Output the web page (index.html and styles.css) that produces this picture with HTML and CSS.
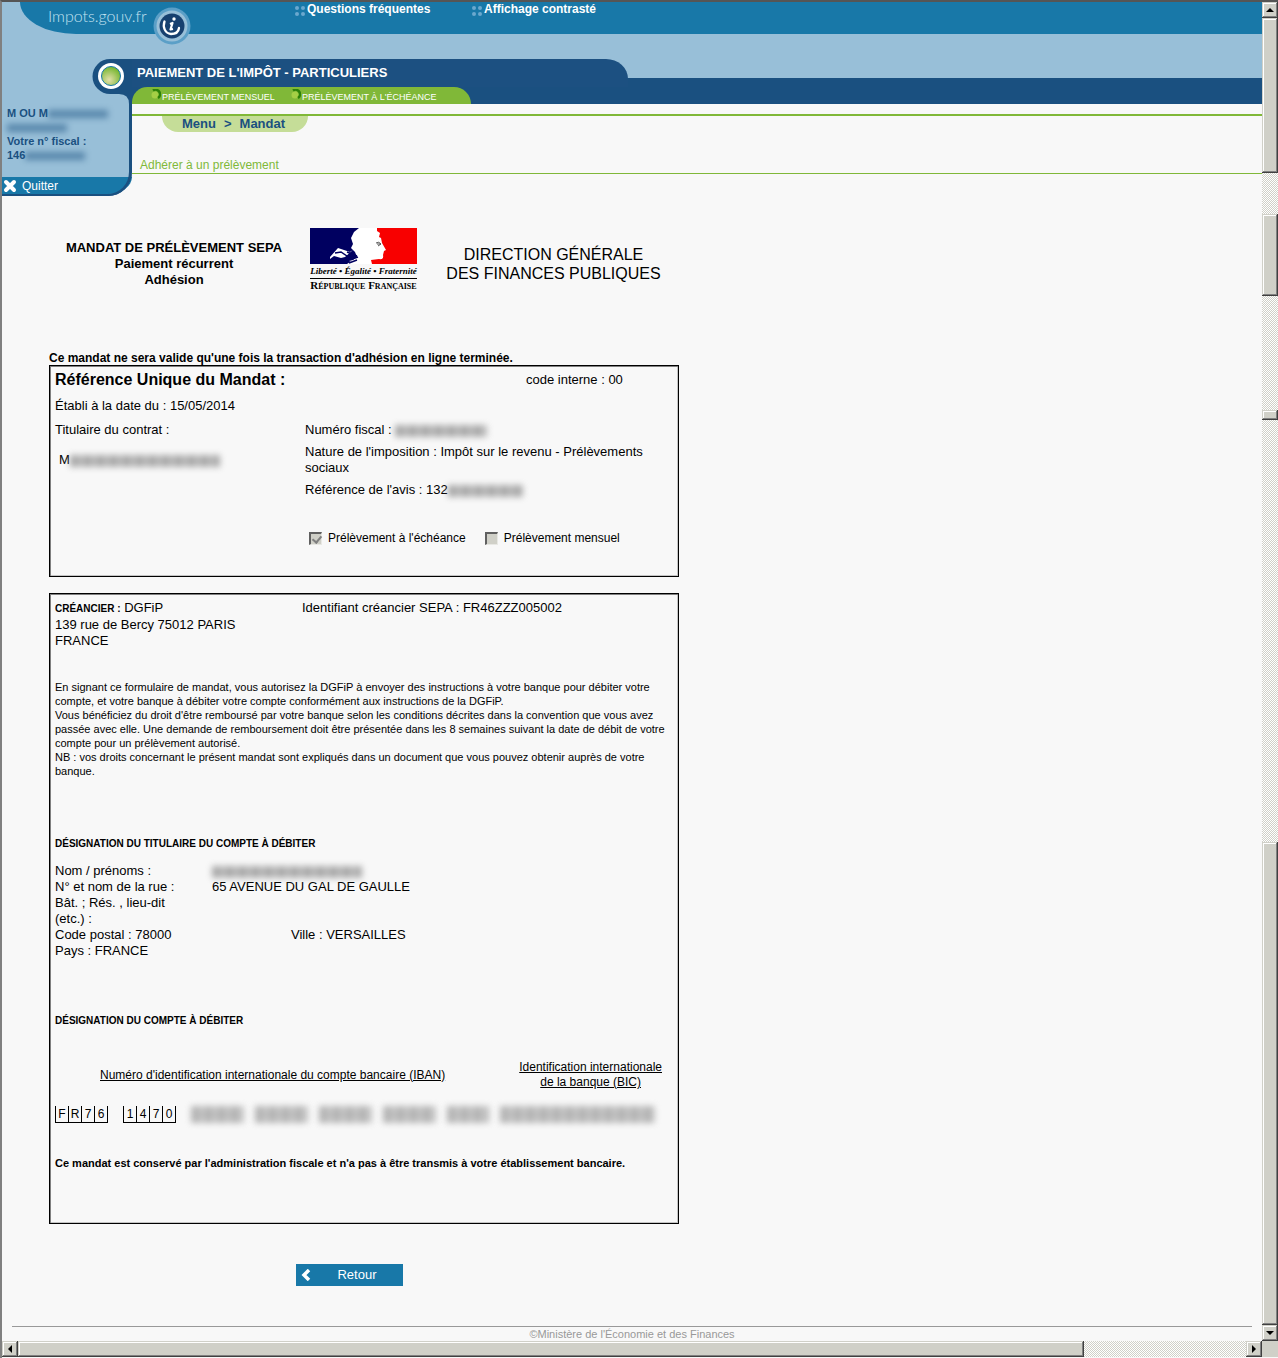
FILE: index.html
```html
<!DOCTYPE html>
<html lang="fr">
<head>
<meta charset="utf-8">
<meta name="viewport" content="width=device-width, initial-scale=1">
<title>Impots.gouv.fr - Mandat de prélèvement SEPA</title>
<link rel="stylesheet" href="styles.css">
</head>
<body>
<div class="window">
  <div class="page">
    <header class="topbar">
      <div class="topbar-inner">
        <a class="brand" href="#">Impots.gouv.fr</a>
        <svg class="brand-badge" viewBox="0 0 40 40" aria-hidden="true">
          <circle cx="20" cy="20" r="18.5" fill="#5b9fc7"/>
          <circle cx="20" cy="20" r="15.5" fill="#98bfd8"/>
          <circle cx="20" cy="20" r="12.5" fill="#17406f"/>
          <path d="M12.5 15.5C10.500 21 13 27.500 19 28C23.500 28 26.500 26 27 22" fill="none" stroke="#fff" stroke-width="2.300" stroke-linecap="round"/>
          <path d="M18 18L20.500 17L18.500 23.500L21 23" fill="none" stroke="#fff" stroke-width="2.200" stroke-linejoin="round"/>
          <circle cx="22" cy="13" r="1.700" fill="#fff"/>
        </svg>
        <nav class="toplinks">
          <a href="#"><svg class="dots" viewBox="0 0 10 10" aria-hidden="true"><g fill="#6ba8ce"><circle cx="2" cy="2" r="2"/><circle cx="8" cy="2" r="2"/><circle cx="2" cy="8" r="2"/><circle cx="8" cy="8" r="2"/></g></svg>Questions fréquentes</a>
          <a href="#"><svg class="dots" viewBox="0 0 10 10" aria-hidden="true"><g fill="#6ba8ce"><circle cx="2" cy="2" r="2"/><circle cx="8" cy="2" r="2"/><circle cx="2" cy="8" r="2"/><circle cx="8" cy="8" r="2"/></g></svg>Affichage contrasté</a>
        </nav>
      </div>
    </header>

    <div class="masthead">
      <aside class="account">
        <svg class="account-badge" viewBox="0 0 40 50" aria-hidden="true">
          <defs><radialGradient id="lamp" cx="0.400" cy="0.700" r="0.700"><stop offset="0" stop-color="#e3dfa8"/><stop offset="1" stop-color="#72b52c"/></radialGradient></defs>
          <path d="M18 0H40V50H37V45Q37 35 27 35H18A17.500 17.500 0 0 1 18 0Z" fill="#1a5080"/>
          <circle cx="19" cy="17" r="13" fill="#fff"/>
          <circle cx="19" cy="17" r="9.500" fill="url(#lamp)" stroke="#1878a8" stroke-width="1"/>
        </svg>
        <div class="identity">
          <p>M OU M<span class="redacted navy w60"></span></p>
          <p><span class="redacted navy w60"></span></p>
          <p>Votre n° fiscal :</p>
          <p>146<span class="redacted navy w60"></span></p>
        </div>
        <a class="quit" href="#"><svg viewBox="0 0 14 14" aria-hidden="true"><path d="M3 3L11 11M11 3L3 11" stroke="#fff" stroke-width="4" stroke-linecap="round"/></svg>Quitter</a>
      </aside>
      <div class="masthead-main">
        <div class="band">
          <div class="band-title">PAIEMENT DE L'IMPÔT - PARTICULIERS</div>
          <nav class="tabs">
            <a href="#"><svg viewBox="0 0 11 11" aria-hidden="true"><circle cx="5" cy="6" r="3.500" fill="#a5cf45"/><path d="M3 1.500A4.500 4.500 0 1 1 8 9" fill="none" stroke="#2d8208" stroke-width="2.500"/></svg>PRÉLÈVEMENT MENSUEL</a>
            <a href="#"><svg viewBox="0 0 11 11" aria-hidden="true"><circle cx="5" cy="6" r="3.500" fill="#a5cf45"/><path d="M3 1.500A4.500 4.500 0 1 1 8 9" fill="none" stroke="#2d8208" stroke-width="2.500"/></svg>PRÉLÈVEMENT À L'ÉCHÉANCE</a>
          </nav>
        </div>
        <div class="crumb-row">
          <nav class="crumbs"><a href="#">Menu</a><span>&gt;</span><a href="#">Mandat</a></nav>
        </div>
        <h1>Adhérer à un prélèvement</h1>
      </div>
    </div>

    <main class="content">
      <div class="intro">
        <h2>MANDAT DE PRÉLÈVEMENT SEPA<br>Paiement récurrent<br>Adhésion</h2>
        <div class="republic">
          <svg viewBox="0 0 107 36" aria-hidden="true">
            <path d="M0 0H107V36H0Z" fill="#fff"/>
            <path d="M0 0H49L44 4L41 10L43 16L41 20L45 24L47 29L43 32L37 36H0Z" fill="#000060"/>
            <path d="M67 0H107V36H62L61 32L69 31Q74 32 73 27L74 23L76 22L72 15L71 10L69 9L70 5L67 3Z" fill="#f80000"/>
            <path d="M20 29L28 20L40 24L43 22L35 29L31 30L24 28L20 31ZM39 33L48 31L44 35Z" fill="#fff"/>
            <path d="M25 25L31 24L37 28M37 24L47 28M42 31L48 29M39 35L47 32" fill="none" stroke="#000060" stroke-width="1.500"/>
            <path d="M66 15Q69 13 71 16L68 18M67 16H71" fill="none" stroke="#555" stroke-width="1"/>
          </svg>
          <p class="motto">Liberté • Égalité • Fraternité</p>
          <p class="state">République Française</p>
        </div>
        <p class="direction">DIRECTION GÉNÉRALE<br>DES FINANCES PUBLIQUES</p>
      </div>

      <p class="notice">Ce mandat ne sera valide qu'une fois la transaction d'adhésion en ligne terminée.</p>

      <section class="box mandate">
        <div class="mandate-head">
          <h2>Référence Unique du Mandat :</h2>
          <p>code interne : 00</p>
        </div>
        <p class="line">Établi à la date du : 15/05/2014</p>
        <div class="mandate-body">
          <div>
            <p class="line">Titulaire du contrat :</p>
            <p class="holder">M<span class="redacted w150"></span></p>
          </div>
          <div>
            <p class="line">Numéro fiscal : <span class="redacted w100"></span></p>
            <p class="tax">Nature de l'imposition : Impôt sur le revenu - Prélèvements sociaux</p>
            <p>Référence de l'avis : 132<span class="redacted w75"></span></p>
            <div class="choices">
              <label><input type="checkbox" checked disabled>Prélèvement à l'échéance</label>
              <label><input type="checkbox" disabled>Prélèvement mensuel</label>
            </div>
          </div>
        </div>
      </section>

      <section class="box details">
        <div class="creditor">
          <p><strong>CRÉANCIER :</strong> DGFiP<br>139 rue de Bercy 75012 PARIS<br>FRANCE</p>
          <p>Identifiant créancier SEPA : FR46ZZZ005002</p>
        </div>
        <div class="terms">
          <p>En signant ce formulaire de mandat, vous autorisez la DGFiP à envoyer des instructions à votre banque pour débiter votre compte, et votre banque à débiter votre compte conformément aux instructions de la DGFiP.</p>
          <p>Vous bénéficiez du droit d'être remboursé par votre banque selon les conditions décrites dans la convention que vous avez passée avec elle. Une demande de remboursement doit être présentée dans les 8 semaines suivant la date de débit de votre compte pour un prélèvement autorisé.</p>
          <p>NB : vos droits concernant le présent mandat sont expliqués dans un document que vous pouvez obtenir auprès de votre banque.</p>
        </div>
        <h3>DÉSIGNATION DU TITULAIRE DU COMPTE À DÉBITER</h3>
        <dl class="address">
          <dt>Nom / prénoms :</dt><dd><span class="redacted w150"></span></dd>
          <dt>N° et nom de la rue :</dt><dd>65 AVENUE DU GAL DE GAULLE</dd>
          <dt>Bât. ; Rés. , lieu-dit (etc.) :</dt><dd></dd>
        </dl>
        <div class="city"><p>Code postal : 78000</p><p>Ville : VERSAILLES</p></div>
        <p>Pays : FRANCE</p>
        <h3 class="account-title">DÉSIGNATION DU COMPTE À DÉBITER</h3>
        <div class="bank-heads">
          <p>Numéro d'identification internationale du compte bancaire (IBAN)</p>
          <p>Identification internationale<br>de la banque (BIC)</p>
        </div>
        <div class="bank-codes">
          <span class="cells"><span>F</span><span>R</span><span>7</span><span>6</span></span>
          <span class="cells"><span>1</span><span>4</span><span>7</span><span>0</span></span>
          <span class="masked">
            <span class="redacted w53"></span><span class="redacted w53"></span><span class="redacted w53"></span><span class="redacted w53"></span><span class="redacted w42"></span><span class="redacted w155"></span>
          </span>
        </div>
        <p class="keep">Ce mandat est conservé par l'administration fiscale et n'a pas à être transmis à votre établissement bancaire.</p>
      </section>

      <div class="actions">
        <button class="back" type="button"><svg viewBox="0 0 10 12" aria-hidden="true"><path d="M8 1L3 6L8 11" fill="none" stroke="#fff" stroke-width="3.500"/></svg><span>Retour</span></button>
      </div>
    </main>

    <footer>©Ministère de l'Économie et des Finances</footer>
  </div>

  <div class="vbar">
    <button class="bevel arrow" type="button" aria-label="Défiler vers le haut"><svg viewBox="0 0 8 8"><path d="M0 6L4 2L8 6Z"/></svg></button>
    <div class="bevel g155"></div><div class="g41"></div><div class="bevel g82"></div><div class="g113"></div><div class="bevel g10"></div><div class="g422"></div><div class="bevel g482"></div>
    <button class="bevel arrow" type="button" aria-label="Défiler vers le bas"><svg viewBox="0 0 8 8"><path d="M0 2L4 6L8 2Z"/></svg></button>
  </div>
  <div class="hbar">
    <button class="bevel arrow" type="button" aria-label="Défiler vers la gauche"><svg viewBox="0 0 8 8"><path d="M6 0L2 4L6 8Z"/></svg></button>
    <div class="bevel g1066"></div><div class="g162"></div>
    <button class="bevel arrow" type="button" aria-label="Défiler vers la droite"><svg viewBox="0 0 8 8"><path d="M2 0L6 4L2 8Z"/></svg></button>
  </div>
  <div class="corner"></div>
</div>
</body>
</html>
```
FILE: styles.css
```css
* { box-sizing: border-box; }

body {
  margin: 0;
  background: #f8f8f8;
  color: #000;
  font: 13px/16px "Liberation Sans", Arial, sans-serif;
}

h1, h2, h3, p, dl, dd { margin: 0; }
a { color: inherit; text-decoration: none; }
svg { display: block; flex: none; }

.window {
  display: grid;
  grid-template-columns: minmax(0, 1fr) 16px;
  grid-template-rows: 1fr 16px;
  min-height: 100vh;
  padding-bottom: 1px;
  border-top: 2px solid #555;
  border-left: 2px solid #808080;
}

.page { display: flex; flex-direction: column; }

/* Top bar */
.topbar { background: #98bfd8; }
.topbar-inner {
  position: relative;
  display: flex;
  height: 32px;
  margin-left: 18px;
  background: #1878a8;
  border-bottom-left-radius: 56px 32px;
}
.brand {
  width: 273px;
  padding: 2px 0 0 28px;
  color: #c4e2f0;
  font: 300 16px/24px Lato, sans-serif;
}
.brand-badge { position: absolute; left: 132px; top: 4px; width: 40px; height: 40px; }
.toplinks { display: flex; color: #fff; font-size: 12px; font-weight: bold; line-height: 14px; }
.toplinks a { display: flex; gap: 2px; width: 177px; padding-left: 2px; }
.dots { width: 10px; height: 10px; margin-top: 4px; }

/* Account panel and titles */
.masthead { display: grid; grid-template-columns: 130px minmax(0, 1fr); }
.account {
  position: relative;
  display: flex;
  flex-direction: column;
  height: 162px;
  background: #98bfd8;
  border-bottom: 2px solid #1a5080;
  border-bottom-right-radius: 24px;
}
.account::after {
  content: "";
  position: absolute;
  inset: 60px 0 -2px 0;
  border: solid #1a5080;
  border-width: 0 3px 2px 0;
  border-bottom-right-radius: 24px;
  pointer-events: none;
}
.account-badge { position: absolute; left: 90px; top: 25px; width: 40px; height: 50px; z-index: 1; }
.identity {
  flex: 1;
  padding: 72px 0 0 5px;
  color: #1a5080;
  font-size: 11px;
  font-weight: bold;
  line-height: 14px;
  white-space: nowrap;
}
.quit {
  display: flex;
  align-items: center;
  gap: 5px;
  height: 17px;
  padding-left: 1px;
  background: #1878a8;
  border-bottom-right-radius: 24px 17px;
  color: #fff;
  font-size: 12px;
}
.quit svg { width: 14px; height: 14px; }

.band {
  height: 70px;
  padding-top: 25px;
  background: linear-gradient(#98bfd8 44px, #1a5080 44px);
}
.band-title {
  width: 496px;
  height: 28px;
  padding-left: 5px;
  background: #1c5081;
  border-top-right-radius: 22px 20px;
  color: #fff;
  font-weight: bold;
  line-height: 28px;
}
.tabs {
  display: flex;
  gap: 15px;
  width: 339px;
  height: 17px;
  padding-left: 18px;
  background: #80b838;
  border-radius: 18px 20px 0 0;
  color: #fff;
  font-size: 9px;
  line-height: 20px;
}
.tabs a { display: flex; gap: 1px; white-space: nowrap; }
.tabs svg { width: 11px; height: 11px; margin-top: 2px; }
.crumb-row { margin-top: 10px; border-top: 2px solid #80b838; }
.crumbs {
  display: flex;
  gap: 8px;
  width: 146px;
  height: 16px;
  margin-left: 30px;
  padding-left: 20px;
  background: #c5dd98;
  border-radius: 0 0 20px 20px;
  color: #1a5080;
  font-weight: bold;
}
h1 {
  margin-top: 25px;
  padding-left: 8px;
  border-bottom: 1px solid #80b838;
  color: #80b838;
  font-size: 12px;
  font-weight: normal;
}

/* Mandate */
.content { width: 630px; max-width: 100%; margin: 32px 0 0 47px; }
.intro {
  display: grid;
  grid-template-columns: 250px 107px 1fr;
  gap: 11px;
  align-items: center;
  text-align: center;
}
.intro h2 { font-size: 13px; line-height: 16px; }
.direction { font-size: 16px; line-height: 19px; }
.republic { padding-bottom: 8px; white-space: nowrap; }
.republic svg { width: 107px; height: 36px; }
.republic p { display: flex; justify-content: center; }
.motto { border-bottom: 1px solid #000; font: italic bold 9px/14px "Liberation Serif", serif; }
.state { font: bold small-caps 11px/13px "Liberation Serif", serif; }

.notice { margin-top: 51px; font-size: 12px; font-weight: bold; line-height: 14px; }
.box {
  padding: 0 5px;
  border: 1px solid #000;
  box-shadow: inset 1px 1px #808080, inset -1px -1px #c4c4c4;
}
.mandate { min-height: 212px; }
.mandate-head { display: grid; grid-template-columns: 471px 1fr; line-height: 28px; }
.mandate-head h2 { font-size: 16px; }
.line { line-height: 24px; }
.mandate-body { display: grid; grid-template-columns: 250px 1fr; }
.holder { margin-top: 10px; padding-left: 4px; }
.tax { margin: 2px 0 6px; }
.choices { display: flex; gap: 19px; margin: 32px 0 0 4px; font-size: 12px; }
.choices label { display: flex; align-items: center; gap: 6px; }
.choices input {
  appearance: none;
  width: 13px;
  height: 13px;
  margin: 0;
  border: solid;
  border-width: 2px 1px 1px 2px;
  border-color: #606060 #e8e8e4 #e8e8e4 #606060;
  background: #d0d0c8;
}
.choices input:checked::after {
  content: "";
  display: block;
  width: 4px;
  height: 7px;
  margin-left: 3px;
  border: solid #808080;
  border-width: 0 2px 2px 0;
  transform: rotate(40deg);
}

.details { margin-top: 16px; padding-top: 6px; padding-bottom: 52px; }
.creditor { display: grid; grid-template-columns: 247px 1fr; }
.creditor strong { font-size: 10px; }
.terms { margin: 31px 0 58px; font-size: 11px; line-height: 14px; }
h3 { font-size: 10px; line-height: 16px; }
.address { display: grid; grid-template-columns: 125px 1fr; column-gap: 32px; margin-top: 11px; }
.city { display: grid; grid-template-columns: 236px 1fr; }
.account-title { margin-top: 54px; }
.bank-heads {
  display: flex;
  align-items: center;
  justify-content: space-between;
  margin-top: 31px;
  padding: 0 11px 0 45px;
  font-size: 12px;
  line-height: 15px;
  text-align: center;
  text-decoration: underline;
}
.bank-codes { display: flex; gap: 15px; align-items: center; margin-top: 16px; }
.cells { display: flex; border-left: 1px solid #000; }
.cells > span {
  width: 13px;
  height: 17px;
  border: solid #000;
  border-width: 0 1px 1px 0;
  font-size: 12px;
  text-align: center;
}
.masked { display: flex; gap: 11px; }
.keep { margin-top: 32px; font-size: 11px; font-weight: bold; white-space: nowrap; }

/* Hidden personal data */
.redacted {
  display: inline-block;
  height: 12px;
  background: repeating-linear-gradient(90deg, #888 0 9px, #aaa 9px 13px);
  filter: blur(3px);
  opacity: 0.7;
  vertical-align: middle;
}
.redacted.navy { height: 8px; background: #1a5080; opacity: 0.5; }
.masked .redacted { height: 17px; opacity: 0.6; }
.w42 { width: 42px; }
.w53 { width: 53px; }
.w60 { width: 60px; }
.w75 { width: 75px; }
.w100 { width: 92px; }
.w150 { width: 150px; }
.w155 { width: 155px; }

.actions { margin: 40px 0; padding-left: 247px; }
.back {
  display: flex;
  align-items: center;
  width: 107px;
  height: 22px;
  padding: 0 0 0 5px;
  border: 0;
  background: #1878a8;
  color: #fff;
  font: inherit;
}
.back svg { width: 10px; height: 12px; }
.back span { flex: 1; }

footer {
  margin: auto 10px 0;
  border-top: 1px solid #999;
  color: #999;
  font-size: 11px;
  line-height: 14px;
  text-align: center;
}

/* Scroll bars */
.vbar, .hbar {
  display: flex;
  background: repeating-conic-gradient(#d0d0c8 0 25%, #fff 0 50%) 0 0 / 2px 2px;
}
.vbar { flex-direction: column; }
.bevel {
  border: 0;
  background: #d0d0c8;
  box-shadow: inset -1px -1px #404040, inset 1px 1px #d0d0c8, inset -2px -2px #808080, inset 2px 2px #fff;
}
.arrow { display: grid; place-items: center; flex: none; width: 16px; height: 16px; padding: 0; }
.arrow svg { width: 8px; height: 8px; }
.corner { background: #d0d0c8; }
.g10 { flex: 10 0 0; }
.g41 { flex: 41 0 0; }
.g82 { flex: 82 0 0; }
.g113 { flex: 113 0 0; }
.g155 { flex: 155 0 0; }
.g162 { flex: 162 0 0; }
.g422 { flex: 422 0 0; }
.g482 { flex: 482 0 0; }
.g1066 { flex: 1066 0 0; }
```
